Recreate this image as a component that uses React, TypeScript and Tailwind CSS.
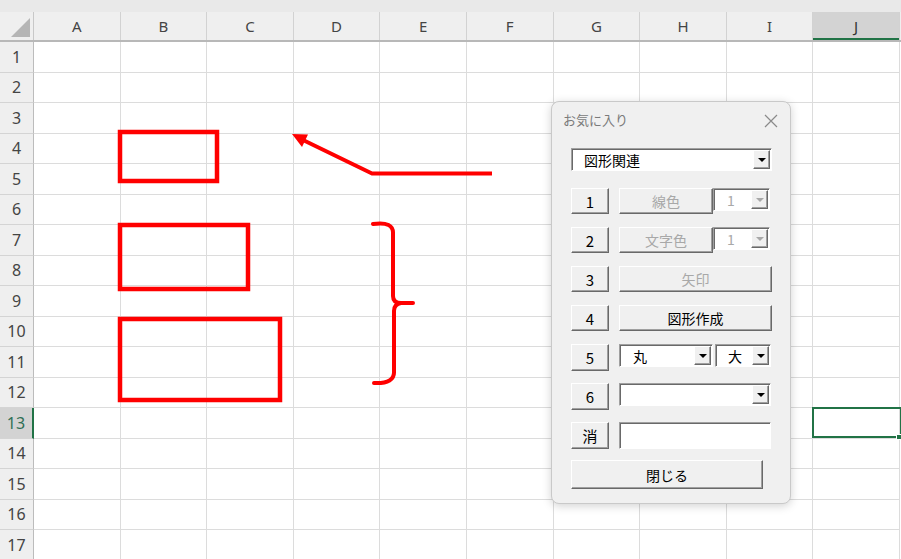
import React from 'react';

const COLS = ['A', 'B', 'C', 'D', 'E', 'F', 'G', 'H', 'I', 'J'];
const ROWS = Array.from({ length: 17 }, (_, i) => i + 1);

const jp = "font-['Noto_Sans_CJK_JP','Noto_Sans',sans-serif]";

function Arrow({ disabled = false }: { disabled?: boolean }) {
  return (
    <div className="flex h-full w-[17px] items-center justify-center border border-t-white border-l-white border-r-[#696969] border-b-[#696969] bg-[#f0f0f0] shadow-[inset_-1px_-1px_0_#a0a0a0]">
      <div
        className={`h-0 w-0 border-x-[4px] border-t-[4px] border-x-transparent ${
          disabled ? 'border-t-[#a8a8a8]' : 'border-t-black'
        }`}
      />
    </div>
  );
}

function Combo({
  width,
  text,
  pad = 'pl-[12px]',
  disabled = false,
}: {
  width: string;
  text?: string;
  pad?: string;
  disabled?: boolean;
}) {
  return (
    <div
      className={`flex h-[23px] ${width} border border-t-[#a0a0a0] border-l-[#a0a0a0] border-r-white border-b-white bg-white shadow-[inset_1px_1px_0_#696969]`}
    >
      <div
        className={`flex flex-1 items-center ${pad} pt-[1px] text-[14px] leading-none ${
          disabled ? 'text-[#a8a8a8]' : 'text-black'
        }`}
      >
        {text}
      </div>
      <div className="py-[1px] pr-[1px]">
        <Arrow disabled={disabled} />
      </div>
    </div>
  );
}

function Btn({
  width,
  height = 'h-[26px]',
  children,
  disabled = false,
  size = 'text-[14px]',
}: {
  width: string;
  height?: string;
  children: React.ReactNode;
  disabled?: boolean;
  size?: string;
}) {
  return (
    <div
      className={`flex ${width} ${height} shrink-0 items-center justify-center border border-t-white border-l-white border-r-[#696969] border-b-[#696969] bg-[#f0f0f0] ${size} leading-none shadow-[inset_-1px_-1px_0_#a0a0a0] ${
        disabled ? 'text-[#a8a8a8]' : 'text-black'
      }`}
    >
      {children}
    </div>
  );
}

function NumBtn({ children, height = 'h-[26px]' }: { children: React.ReactNode; height?: string }) {
  return (
    <Btn width="w-[38px]" height={height} size="text-[15px]">
      {children}
    </Btn>
  );
}

function FavoritesDialog() {
  return (
    <div
      className={`absolute left-[551px] top-[101px] flex h-[403px] w-[240px] flex-col rounded-[8px] border border-[#c9c9c9] bg-[#f0f0f0] shadow-[0_2px_10px_rgba(0,0,0,0.18)] ${jp}`}
    >
      <div className="flex h-[36px] items-center justify-between pl-[11px] pr-[12px]">
        <span className="text-[13px] text-[#7a7a7a]">お気に入り</span>
        <svg width="14" height="14" viewBox="0 0 14 14" className="mt-[1px]">
          <path d="M1 1 L13 13 M13 1 L1 13" stroke="#8a8a8a" strokeWidth="1.2" fill="none" />
        </svg>
      </div>

      <div className="flex flex-col pl-[19px]">
        <div className="mt-[10px]">
          <Combo width="w-[201px]" text="図形関連" />
        </div>

        <div className="mt-[17px] flex items-start">
          <NumBtn>1</NumBtn>
          <div className="ml-[10px] flex items-start">
            <Btn width="w-[94px]" disabled>
              線色
            </Btn>
            <Combo width="w-[57px]" text="1" pad="pl-[13px]" disabled />
          </div>
        </div>

        <div className="mt-[13px] flex items-start">
          <NumBtn>2</NumBtn>
          <div className="ml-[10px] flex items-start">
            <Btn width="w-[94px]" disabled>
              文字色
            </Btn>
            <Combo width="w-[57px]" text="1" pad="pl-[13px]" disabled />
          </div>
        </div>

        <div className="mt-[13px] flex items-start">
          <NumBtn>3</NumBtn>
          <div className="ml-[10px]">
            <Btn width="w-[153px]" disabled>
              矢印
            </Btn>
          </div>
        </div>

        <div className="mt-[13px] flex items-start">
          <NumBtn>4</NumBtn>
          <div className="ml-[10px]">
            <Btn width="w-[153px]">図形作成</Btn>
          </div>
        </div>

        <div className="mt-[13px] flex items-start">
          <NumBtn height="h-[27px]">5</NumBtn>
          <div className="ml-[10px] flex gap-[2px]">
            <Combo width="w-[94px]" text="丸" pad="pl-[13px]" />
            <Combo width="w-[56px]" text="大" pad="pl-[12px]" />
          </div>
        </div>

        <div className="mt-[12px] flex items-start">
          <NumBtn height="h-[27px]">6</NumBtn>
          <div className="ml-[10px]">
            <Combo width="w-[152px]" />
          </div>
        </div>

        <div className="mt-[12px] flex items-start">
          <NumBtn height="h-[27px]">消</NumBtn>
          <div className="ml-[10px] h-[27px] w-[152px] border border-t-[#a0a0a0] border-l-[#a0a0a0] border-r-white border-b-white bg-white shadow-[inset_1px_1px_0_#696969]" />
        </div>

        <div className="mt-[11px]">
          <Btn width="w-[192px]" height="h-[29px]">閉じる</Btn>
        </div>
      </div>
    </div>
  );
}

function Shapes() {
  return (
    <svg
      className="pointer-events-none absolute left-0 top-0"
      width="901"
      height="559"
      viewBox="0 0 901 559"
    >
      <g fill="none" stroke="#ff0000" strokeWidth="4.5">
        <rect x="120" y="132" width="97" height="49" />
        <rect x="120" y="225" width="128" height="64" />
        <rect x="120" y="319" width="160" height="81" />
      </g>
      <path
        d="M492 173.5 L372 173.5 L303 140"
        fill="none"
        stroke="#ff0000"
        strokeWidth="4"
        strokeLinejoin="round"
      />
      <polygon points="292,134 308,134.5 302,147" fill="#ff0000" />
      <path
        d="M373 224 Q394 221 393 234 L393 296 Q393 303 401 303 L413 303 M401 303 Q394 304 394 311 L394 371 Q395 384 374 383"
        fill="none"
        stroke="#ff0000"
        strokeWidth="4"
        strokeLinecap="round"
      />
    </svg>
  );
}

export default function App() {
  return (
    <div className="relative h-[559px] w-[901px] overflow-hidden bg-white font-['Noto_Sans','Liberation_Sans',sans-serif]">
      <div className="h-[12px] bg-[#e9e9e9]" />

      {/* column headers */}
      <div className="grid h-[30px] grid-cols-[34px_repeat(10,86.6px)] border-b-2 border-[#b8b8b8] bg-[#efefef]">
        <div className="relative border-r border-[#c8c8c8]">
          <div className="absolute bottom-[3px] right-[3px] h-0 w-0 border-b-[19px] border-l-[19px] border-b-[#b5b5b5] border-l-transparent" />
        </div>
        {COLS.map((c) => (
          <div
            key={c}
            className={`flex items-center justify-center border-r border-[#d2d2d2] text-[15px] ${
              c === 'J'
                ? 'bg-[#d3d3d3] text-[#333] shadow-[inset_0_-2px_0_#217346]'
                : 'text-[#444]'
            }`}
          >
            {c}
          </div>
        ))}
      </div>

      {/* rows */}
      {ROWS.map((r) => (
        <div key={r} className="grid h-[30.5px] grid-cols-[34px_repeat(10,86.6px)]">
          <div
            className={`flex items-center justify-center border-b border-r border-b-[#d4d4d4] text-[16px] ${
              r === 13
                ? 'border-r-2 border-r-[#217346] bg-[#d3d3d3] text-[#2f6f55]'
                : 'border-r-[#bcbcbc] bg-[#efefef] text-[#444]'
            }`}
          >
            {r}
          </div>
          {COLS.map((c) => (
            <div key={c} className="border-b border-r border-[#dcdcdc]" />
          ))}
        </div>
      ))}

      <Shapes />

      {/* active cell J13 */}
      <div className="absolute left-[812px] top-[407px] h-[31px] w-[90px] border-2 border-[#217346]" />
      <div className="absolute left-[896px] top-[434px] h-[6px] w-[6px] border border-white bg-[#217346]" />

      <FavoritesDialog />
    </div>
  );
}
